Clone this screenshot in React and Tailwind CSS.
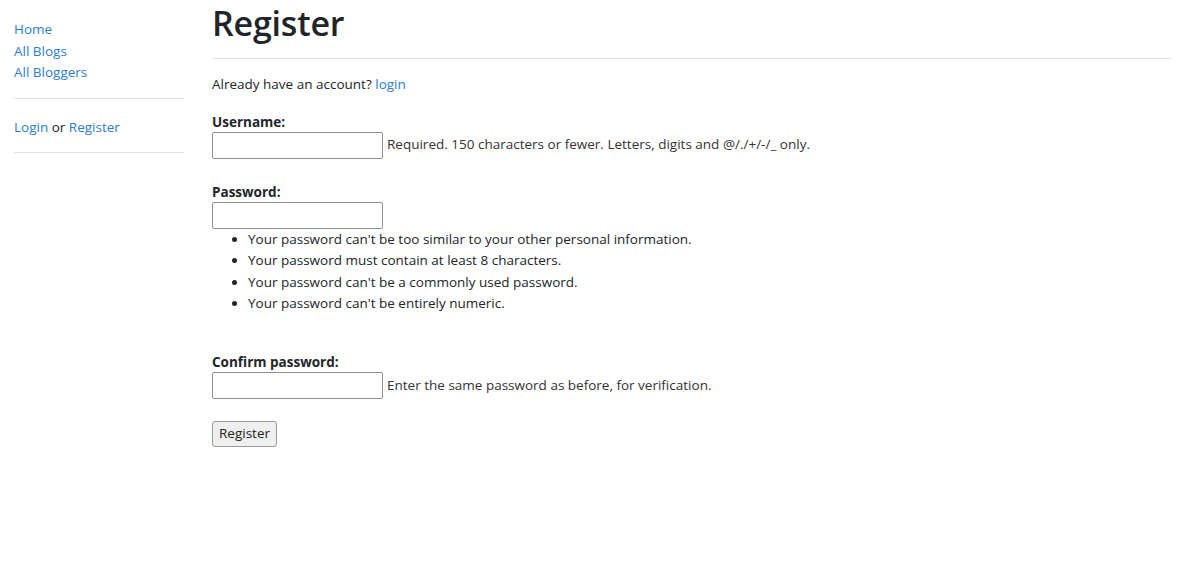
const sideLinks = ['Home', 'All Blogs', 'All Bloggers']

const pwRules = [
  "Your password can't be too similar to your other personal information.",
  'Your password must contain at least 8 characters.',
  "Your password can't be a commonly used password.",
  "Your password can't be entirely numeric.",
]

function Field({ label, help, className = '' }) {
  return (
    <div className={className}>
      <label className="block font-bold leading-[20px]">{label}</label>
      <div className="flex items-center">
        <input
          type="text"
          className="h-[27px] w-[171px] rounded-[2px] border border-[#8f8f8f] bg-white px-1 outline-none"
        />
        {help && <span className="ml-[4px] text-[#333]">{help}</span>}
      </div>
    </div>
  )
}

export default function App() {
  return (
    <div className="flex min-h-[571px] bg-white font-['Open_Sans',sans-serif] text-[13.5px] leading-[21.6px] text-[#212529]">
      <aside className="w-[198px] shrink-0 px-[14px] pt-[19px]">
        <ul>
          {sideLinks.map((l) => (
            <li key={l}>
              <a href="#" className="text-[#2d7dd2]">
                {l}
              </a>
            </li>
          ))}
        </ul>
        <hr className="mt-[14px] border-[#e3e3e3]" />
        <div className="mt-[18px]">
          <a href="#" className="text-[#2d7dd2]">Login</a> or{' '}
          <a href="#" className="text-[#2d7dd2]">Register</a>
        </div>
        <hr className="mt-[14px] border-[#e3e3e3]" />
      </aside>

      <main className="flex-1 pl-[14px] pr-[14px] pt-[2px]">
        <h1 className="text-[34px] font-semibold leading-[42px] tracking-[-0.2px]">Register</h1>
        <hr className="mt-[14px] border-[#e3e3e3]" />
        <p className="mt-[15px]">
          Already have an account?{' '}
          <a href="#" className="text-[#2d7dd2]">login</a>
        </p>

        <form className="mt-[16px]">
          <Field
            label="Username:"
            help="Required. 150 characters or fewer. Letters, digits and @/./+/-/_ only."
          />
          <Field label="Password:" className="mt-[23px]" />
          <ul className="list-disc pl-[36px]">
            {pwRules.map((r) => (
              <li key={r}>{r}</li>
            ))}
          </ul>
          <Field
            label="Confirm password:"
            help="Enter the same password as before, for verification."
            className="mt-[37px]"
          />
          <button
            type="button"
            className="mt-[22px] h-[26px] rounded-[3px] border border-[#9a9a9a] bg-[#efefef] px-[6px] leading-none text-[#222]"
          >
            Register
          </button>
        </form>
      </main>
    </div>
  )
}
